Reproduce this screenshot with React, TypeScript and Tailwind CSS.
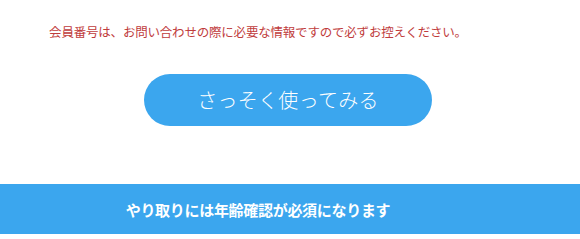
export default function App() {
  return (
    <div className="w-[580px] h-[239px] bg-white flex flex-col items-center overflow-hidden" style={{ fontFamily: '"Noto Sans CJK JP", "Noto Sans", sans-serif' }}>
      <p className="mt-[23px] w-full pr-[64px] text-center h-[18px] leading-[18px] text-[12.5px] text-[#bf3c3c] tracking-[-0.2px] whitespace-nowrap">
        会員番号は、お問い合わせの際に必要な情報ですので必ずお控えください。
      </p>
      <button className="mt-[33px] mr-[4px] w-[288px] h-[52px] rounded-full bg-[#3ba6ee] text-white text-[20px] font-light flex items-center justify-center tracking-[0.3px]">
        さっそく使ってみる
      </button>
      <div className="mt-[58px] w-full h-[50px] pr-[64px] bg-[#3ba6ee] flex items-center justify-center text-white text-[15px] font-bold tracking-[-0.3px]">
        <span className="mt-[3px]">やり取りには年齢確認が必須になります</span>
      </div>
    </div>
  );
}
